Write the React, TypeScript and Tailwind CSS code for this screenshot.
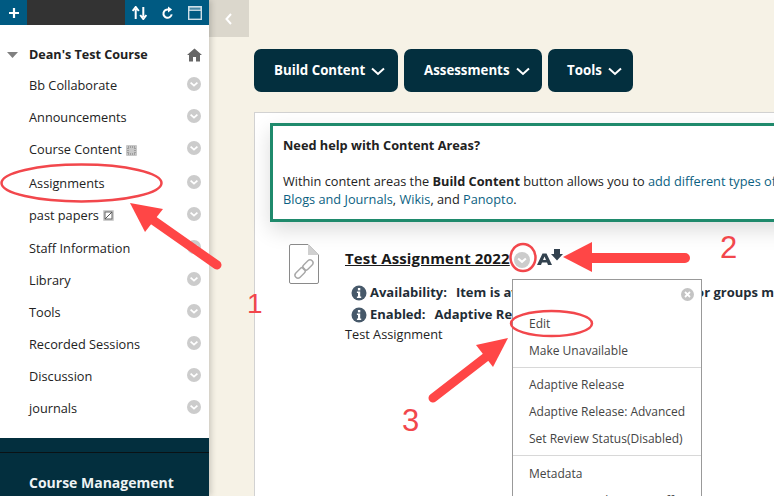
import React from "react";

const font = { fontFamily: '"Open Sans", sans-serif' };

function Chevron({ className = "", size = 14 }: { className?: string; size?: number }) {
  return (
    <svg width={size} height={size} viewBox="0 0 14 14" className={className}>
      <circle cx="7" cy="7" r="7" fill="#cccccc" />
      <path d="M3.6 5.6 L7 8.6 L10.4 5.6" fill="none" stroke="#ffffff" strokeWidth="1.8" />
    </svg>
  );
}

function NavRow({ label, h, icon }: { label: string; h: string; icon?: React.ReactNode }) {
  return (
    <div className={`flex items-center pl-[29px] pr-[8px] ${h}`}>
      <span className="text-[12.75px] leading-[18px] text-[#222222]">{label}</span>
      {icon}
      <Chevron className="mb-[2px] ml-auto" />
    </div>
  );
}

const GridIcon = (
  <svg width="11" height="11" viewBox="0 0 11 11" className="ml-[4px] mt-[2px]">
    <rect width="11" height="11" rx="1" fill="#c8c8c8" />
    <rect x="2" y="2" width="7" height="7" fill="none" stroke="#777777" strokeWidth="1" strokeDasharray="1 1" />
  </svg>
);

const SlashIcon = (
  <svg width="11" height="11" viewBox="0 0 11 11" className="ml-[4px]">
    <rect width="11" height="11" rx="1" fill="#cfcfcf" />
    <rect x="2" y="2" width="7" height="7" fill="#ffffff" stroke="#666666" strokeWidth="1" />
    <path d="M2 9 L9 2" stroke="#555555" strokeWidth="1" />
  </svg>
);

function Info() {
  return (
    <svg width="16" height="16" viewBox="0 0 16 16" className="shrink-0">
      <circle cx="8" cy="8" r="7.5" fill="#47596a" />
      <rect x="6.9" y="3" width="2.4" height="2.4" fill="#ffffff" />
      <path d="M5.9 6.5 H9.2 V11.4 H10.2 V12.9 H5.9 V11.4 H7 V8 H5.9 Z" fill="#ffffff" />
    </svg>
  );
}

function MenuItem({ label, h }: { label: string; h: string }) {
  return (
    <div className={`flex items-center pl-[16px] text-[12px] whitespace-nowrap text-[#444444] ${h}`}>{label}</div>
  );
}

function ActionButton({ label, w, pl }: { label: string; w: string; pl: string }) {
  return (
    <div className={`flex h-[43px] items-center rounded-[7px] bg-[#032f3e] ${w} ${pl}`}>
      <span className="mt-[1px] text-[13.3px] font-bold text-white">{label}</span>
      <svg width="14" height="9" viewBox="0 0 14 9" className="ml-[6px] mt-[2px]">
        <path d="M1 1.5 L7 7 L13 1.5" fill="none" stroke="#ffffff" strokeWidth="2" />
      </svg>
    </div>
  );
}

export default function App() {
  return (
    <div className="relative flex h-[496px] w-[774px] overflow-hidden bg-[#f6f2e6]" style={font}>
      {/* Sidebar */}
      <aside className="z-10 flex h-full w-[209px] shrink-0 flex-col bg-white shadow-[2px_0_6px_rgba(0,0,0,0.18)]">
        <div className="flex h-[25px] shrink-0 bg-[#005a82]">
          <div className="flex w-[27px] items-center justify-center">
            <svg width="12" height="12" viewBox="0 0 12 12">
              <path d="M6 1 V11 M1 6 H11" stroke="#ffffff" strokeWidth="2.2" />
            </svg>
          </div>
          <div className="w-[98px] bg-[#333333]" />
          <div className="flex flex-1 items-center">
            <svg width="15" height="14" viewBox="0 0 15 14" className="ml-[7px]">
              <path d="M3.7 13 V3 M0.6 5 L3.7 1 L6.8 5 M11.3 1 V11 M8.2 9 L11.3 13 L14.4 9" fill="none" stroke="#ffffff" strokeWidth="2" />
            </svg>
            <svg width="12" height="14" viewBox="0 0 13 14" className="ml-[15px]">
              <path d="M10.5 8.5 A4.5 4.5 0 1 1 7 3.2" fill="none" stroke="#ffffff" strokeWidth="2.2" />
              <path d="M6.5 0 L11 3.3 L6.5 6.5 Z" fill="#ffffff" />
            </svg>
            <svg width="14" height="14" viewBox="0 0 14 14" className="ml-[14px]">
              <rect x="0.7" y="0.7" width="12.6" height="12.6" fill="none" stroke="#cfe0e8" strokeWidth="1.4" />
              <rect x="0.7" y="0.7" width="12.6" height="3.6" fill="#cfe0e8" fillOpacity="0.35" stroke="#cfe0e8" strokeWidth="1.2" />
            </svg>
          </div>
        </div>

        <div className="flex flex-col pt-[18px]">
          <div className="flex h-[23px] items-center pl-[7px] pr-[7px]">
            <svg width="11" height="6" viewBox="0 0 11 6">
              <path d="M0 0 H11 L5.5 6 Z" fill="#808080" />
            </svg>
            <span className="ml-[11px] mt-[2px] text-[12.6px] font-bold text-[#222222]">Dean's Test Course</span>
            <svg width="15" height="14" viewBox="0 0 15 14" className="ml-auto">
              <path d="M7.5 0.5 L15 7 H13 V13.5 H9 V9 H6 V13.5 H2 V7 H0 Z" fill="#666666" />
            </svg>
          </div>
          <div className="mt-[3px] flex flex-col">
            <NavRow label="Bb Collaborate" h="h-[32px]" />
            <NavRow label="Announcements" h="h-[32px]" />
            <NavRow label="Course Content" h="h-[32px]" icon={GridIcon} />
            <NavRow label="Assignments" h="h-[34px] pt-[2px]" />
            <NavRow label="past papers" h="h-[32px]" icon={SlashIcon} />
            <NavRow label="Staff Information" h="h-[33px]" />
            <NavRow label="Library" h="h-[32px]" />
            <NavRow label="Tools" h="h-[32px]" />
            <NavRow label="Recorded Sessions" h="h-[32px]" />
            <NavRow label="Discussion" h="h-[32px]" />
            <NavRow label="journals" h="h-[32px]" />
          </div>
        </div>

        <div className="mt-auto h-[58px] shrink-0 bg-[#032f3e] pt-[14px]">
          <div className="h-px bg-[#0a1215]" />
          <div className="pl-[29px] pt-[20px] text-[14px] leading-[19px] font-bold text-[#eef3f4]">Course Management</div>
        </div>
      </aside>

      {/* Main */}
      <main className="relative min-w-0 flex-1">
        <div className="flex h-[37px] w-[40px] items-center justify-center bg-[#dbd7cc]">
          <svg width="7" height="12" viewBox="0 0 7 12" className="ml-[-1px]">
            <path d="M6 1 L1.5 6 L6 11" fill="none" stroke="#ffffff" strokeWidth="2" />
          </svg>
        </div>

        <div className="flex gap-[6px] pl-[45px] pt-[12px]">
          <ActionButton label="Build Content" w="w-[144px]" pl="pl-[20px]" />
          <ActionButton label="Assessments" w="w-[138px]" pl="pl-[20px]" />
          <ActionButton label="Tools" w="w-[85px]" pl="pl-[19px]" />
        </div>

        <section className="ml-[45px] mt-[20px] h-[400px] w-[600px] border border-[#d2d2d2] bg-white pl-[15px] pt-[10px]">
          <div className="h-[99px] w-[560px] border-[3px] border-[#1f8a6c] bg-white pl-[10px] pt-[10px] text-[12.75px] leading-[18px] whitespace-nowrap text-[#222222] shadow-[0_8px_20px_rgba(0,0,0,0.14)]">
            <div className="font-bold">Need help with Content Areas?</div>
            <div className="mt-[18px]">
              Within content areas the <b>Build Content</b> button allows you to{" "}
              <span className="text-[#0b5f82]">add different types of</span>
            </div>
            <div>
              <span className="text-[#0b5f82]">Blogs and Journals</span>, <span className="text-[#0b5f82]">Wikis</span>, and{" "}
              <span className="text-[#0b5f82]">Panopto</span>.
            </div>
          </div>

          <div className="mt-[22px] flex">
            <svg width="30" height="40" viewBox="0 0 30 40" className="ml-[19px] shrink-0">
              <path d="M2 0.5 H19 L29.5 11 V38 Q29.5 39.5 28 39.5 H2 Q0.5 39.5 0.5 38 V2 Q0.5 0.5 2 0.5 Z" fill="#ffffff" stroke="#8a8a8a" strokeWidth="1" />
              <path d="M19 0.5 L29.5 11 H19 Z" fill="#d0d0d0" />
              <g fill="none" stroke="#a8a8a8" strokeWidth="1.4" transform="rotate(-45 15 25)">
                <rect x="3.5" y="22" width="12" height="6" rx="3" />
                <rect x="14.5" y="22" width="12" height="6" rx="3" />
              </g>
            </svg>
            <div className="ml-[26px] min-w-0">
              <div className="flex h-[28px] items-center">
                <span className="text-[15px] font-bold tracking-[0.15px] text-[#1a1a1a] underline">Test Assignment 2022</span>
                <Chevron size={16} className="ml-[4px] mt-[3px]" />
                <svg width="26" height="17" viewBox="0 0 26 17" className="ml-[7px] mb-[2px]">
                  <path d="M0 16 L5.5 4.5 H9.5 L15 16 H11 L10 13.6 H5 L4 16 Z M6 11 H9 L7.5 7.6 Z" fill="#33424f" fillRule="evenodd" />
                  <path d="M17 0 H23 V5 H26 L20 11.5 L14 5 H17 Z" fill="#33424f" />
                </svg>
              </div>
              <div className="ml-[6px] mt-[11px] flex h-[20px] items-center whitespace-nowrap text-[13px] font-bold text-[#1f2d36]">
                <Info />
                <span className="ml-[3px]">Availability:</span>
                <span className="ml-[9px]">Item is available to designated users or groups matching</span>
              </div>
              <div className="ml-[6px] mt-[2px] flex h-[20px] items-center whitespace-nowrap text-[13px] font-bold text-[#1f2d36]">
                <Info />
                <span className="ml-[3px]">Enabled:</span>
                <span className="ml-[9px]">Adaptive Release</span>
              </div>
              <div className="text-[12.75px] leading-[18px] text-[#222222]">Test Assignment</div>
            </div>
          </div>
        </section>

        {/* Context menu */}
        <div className="absolute left-[303px] top-[279px] z-20 h-[240px] w-[190px] border border-[#999999] bg-white">
          <div className="flex h-[30px] items-start justify-end pr-[7px] pt-[8px]">
            <svg width="13" height="13" viewBox="0 0 13 13">
              <circle cx="6.5" cy="6.5" r="6.5" fill="#c4c4c4" />
              <path d="M4 4 L9 9 M9 4 L4 9" stroke="#ffffff" strokeWidth="1.8" />
            </svg>
          </div>
          <MenuItem label="Edit" h="h-[27px]" />
          <MenuItem label="Make Unavailable" h="h-[27px]" />
          <div className="mt-[3px] h-px bg-[#d8d8d8]" />
          <div className="pb-[3px] pt-[3px]">
            <MenuItem label="Adaptive Release" h="h-[27px]" />
            <MenuItem label="Adaptive Release: Advanced" h="h-[27px]" />
            <MenuItem label="Set Review Status(Disabled)" h="h-[27px]" />
          </div>
          <div className="h-px bg-[#d8d8d8]" />
          <div className="pt-[4px]">
            <MenuItem label="Metadata" h="h-[27px]" />
            <MenuItem label="Statistics Tracking (On/Off)" h="h-[27px]" />
          </div>
        </div>
      </main>

      {/* Hand-drawn annotations layered over the screenshot */}
      <svg width="774" height="496" viewBox="0 0 774 496" className="pointer-events-none absolute left-0 top-0 z-30">
        <g fill="none" stroke="#f2474c" strokeWidth="2.5">
          <ellipse cx="81.5" cy="183" rx="80" ry="18.5" />
          <ellipse cx="523" cy="257.5" rx="12.5" ry="13.5" />
          <ellipse cx="551.5" cy="323.5" rx="40.5" ry="12.5" />
        </g>
        <g stroke="#ff4646" strokeWidth="9" strokeLinecap="round" fill="#ff4646">
          <path d="M217 265 L150 218" />
          <path d="M685 258 L585 258" strokeWidth="10" />
          <path d="M433 398 L495 350" />
        </g>
        <g fill="#ff4646">
          <path d="M130 203 L163 209 L145 232 Z" />
          <path d="M563 257 L592 242 L592 272 Z" />
          <path d="M508 338 L476 345 L493 367 Z" />
        </g>
      </svg>
      <span className="absolute left-[247px] top-[287px] z-30 text-[28px] leading-[34px] text-[#f2474c]" style={{ fontFamily: '"Liberation Sans", sans-serif' }}>1</span>
      <span className="absolute left-[720px] top-[230px] z-30 text-[31px] leading-[36px] text-[#f2474c]" style={{ fontFamily: '"Liberation Sans", sans-serif' }}>2</span>
      <span className="absolute left-[402px] top-[403px] z-30 text-[31px] leading-[36px] text-[#f2474c]" style={{ fontFamily: '"Liberation Sans", sans-serif' }}>3</span>
    </div>
  );
}
